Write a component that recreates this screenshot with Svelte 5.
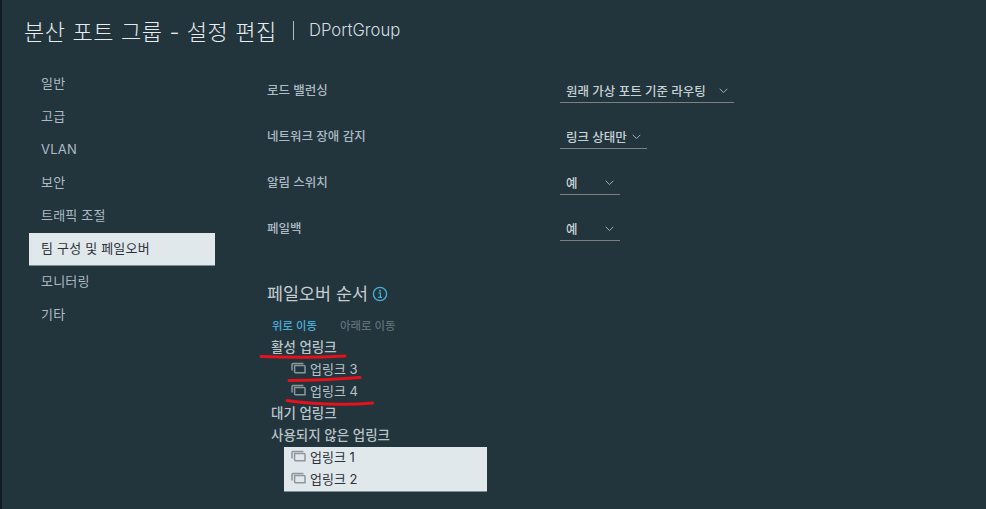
<script>
	const nav = ['일반', '고급', 'VLAN', '보안', '트래픽 조절', '팀 구성 및 페일오버', '모니터링', '기타'];
	const active = '팀 구성 및 페일오버';

	const fields = [
		{ label: '로드 밸런싱', value: '원래 가상 포트 기준 라우팅', width: 174 },
		{ label: '네트워크 장애 감지', value: '링크 상태만', width: 87 },
		{ label: '알림 스위치', value: '예', width: 60 },
		{ label: '페일백', value: '예', width: 60 }
	];
</script>

{#snippet uplinkIcon()}
	<svg class="uplink-icon" width="15" height="12" viewBox="0 0 15 12" fill="none" stroke="currentColor" stroke-width="1.5">
		<path d="M1 8.6V2.4Q1 1.4 2 1.4H12.4" />
		<path d="M3.6 3.4H13Q14 3.4 14 4.4V10.8H4.6Q3.6 10.8 3.6 9.8Z" />
	</svg>
{/snippet}

<div class="dialog">
	<header>
		<h1>분산 포트 그룹 - 설정 편집</h1>
		<span class="divider"></span>
		<span class="object-name">DPortGroup</span>
	</header>

	<div class="body">
		<nav>
			{#each nav as item}
				<div class="nav-item" class:active={item === active}>{item}</div>
			{/each}
		</nav>

		<main>
			<div class="fields">
				{#each fields as f}
					<div class="field">
						<span class="field-label">{f.label}</span>
						<div class="select" style="width: {f.width}px">
							<span>{f.value}</span>
							<svg width="9" height="6" viewBox="0 0 9 6" fill="none" stroke="currentColor" stroke-width="1"><path d="M.7.8l3.8 3.8L8.3.8" /></svg>
						</div>
					</div>
				{/each}
			</div>

			<h2>
				페일오버 순서
				<svg width="16" height="16" viewBox="0 0 16 16" fill="none">
					<circle cx="8" cy="8" r="6.6" stroke="#49afd9" stroke-width="1.3" />
					<circle cx="8" cy="4.8" r="1" fill="#49afd9" />
					<path d="M6.4 7h2v4.4M6.2 11.4h3.8" stroke="#49afd9" stroke-width="1.2" />
				</svg>
			</h2>

			<div class="actions">
				<span class="move-up">위로 이동</span>
				<span class="move-down">아래로 이동</span>
			</div>

			<div class="group">활성 업링크</div>
			<div class="uplink">{@render uplinkIcon()}업링크 3</div>
			<div class="uplink">{@render uplinkIcon()}업링크 4</div>
			<div class="group">대기 업링크</div>
			<div class="group">사용되지 않은 업링크</div>
			<div class="selected-list">
				<div class="uplink">{@render uplinkIcon()}업링크 1</div>
				<div class="uplink">{@render uplinkIcon()}업링크 2</div>
			</div>
		</main>
	</div>

	<!-- hand-drawn annotation on top of the screenshot -->
	<svg class="scribbles" width="986" height="509" viewBox="0 0 986 509" fill="none" stroke="#e4121c" stroke-width="3" stroke-linecap="round">
		<path d="M261 356.5C285 357.5 320 357.5 345 356" />
		<path d="M289 380.5C310 380.5 340 379 360 377.5" />
		<path d="M287 400.5C310 404 345 405.5 372.5 403" />
	</svg>
</div>

<style>
	:global(body) {
		margin: 0;
		background: #22343c;
	}

	.dialog {
		position: relative;
		box-sizing: border-box;
		width: 986px;
		height: 509px;
		overflow: hidden;
		border-left: 2px solid #101d25;
		background: #22343c;
		color: #adbbc4;
		font-family: 'Inter', 'Noto Sans CJK KR', sans-serif;
		font-size: 13px;
	}

	header {
		display: flex;
		align-items: center;
		height: 60px;
		padding-left: 22px;
		color: #e9ecef;
	}

	h1 {
		margin: 0;
		font-size: 22px;
		font-weight: 300;
		letter-spacing: 0.6px;
		white-space: nowrap;
	}

	.divider {
		width: 1px;
		height: 19px;
		margin: 0 15px 0 16px;
		background: #adbbc4;
	}

	.object-name {
		font-size: 16.7px;
		font-weight: 300;
		color: #d5dde2;
	}

	.body {
		display: flex;
	}

	nav {
		width: 186px;
		margin-left: 27px;
		padding-top: 8px;
	}

	.nav-item {
		height: 33px;
		line-height: 31px;
		padding-left: 12px;
		letter-spacing: 0.2px;
	}

	.nav-item.active {
		background: #e1e8ec;
		color: #2a3338;
		box-sizing: border-box;
		border-bottom: 1px solid #7d8d94;
	}

	main {
		margin-left: 52px;
		padding-top: 19px;
	}

	.fields {
		display: flex;
		flex-direction: column;
		gap: 23px;
	}

	.field {
		display: flex;
		align-items: flex-start;
		height: 23px;
	}

	.field-label {
		width: 293px;
		line-height: 20px;
		margin-top: 2px;
		font-size: 12.5px;
		font-weight: 500;
	}

	.select {
		display: flex;
		align-items: center;
		justify-content: space-between;
		box-sizing: border-box;
		height: 24px;
		padding: 0 6px;
		border-bottom: 1px solid #7d7f80;
		font-size: 12.5px;
		color: #c8d1d6;
		font-weight: 500;
	}

	.select svg {
		color: #a3b0b7;
	}

	h2 {
		display: flex;
		align-items: center;
		gap: 4px;
		margin: 42px 0 0;
		font-size: 17.4px;
		font-weight: 400;
		line-height: 24px;
		color: #c5ced3;
	}

	.actions {
		display: flex;
		gap: 23px;
		margin: 13px 0 0 5px;
		font-size: 11.4px;
		line-height: 14px;
		font-weight: 500;
	}

	.move-up {
		color: #49afd9;
	}

	.move-down {
		color: #5f7078;
	}

	.group {
		height: 22px;
		line-height: 22px;
		padding-left: 4px;
		font-size: 13.5px;
		font-weight: 500;
		color: #b9c4ca;
	}

	.actions + .group {
		margin-top: 3px;
	}

	.uplink {
		display: flex;
		align-items: center;
		gap: 4px;
		box-sizing: border-box;
		height: 22px;
		padding: 0 0 2px 24px;
		color: #b9c4ca;
	}

	.uplink-icon {
		color: #8b979d;
	}

	.selected-list {
		box-sizing: border-box;
		width: 203px;
		height: 45px;
		margin: 1px 0 0 17px;
		border-bottom: 1px solid #7d8d94;
		background: #e1e8ec;
	}

	.selected-list .uplink {
		padding: 0 0 4px 7px;
		color: #2a3338;
	}

	.scribbles {
		position: absolute;
		top: 0;
		left: -2px;
		pointer-events: none;
	}
</style>
